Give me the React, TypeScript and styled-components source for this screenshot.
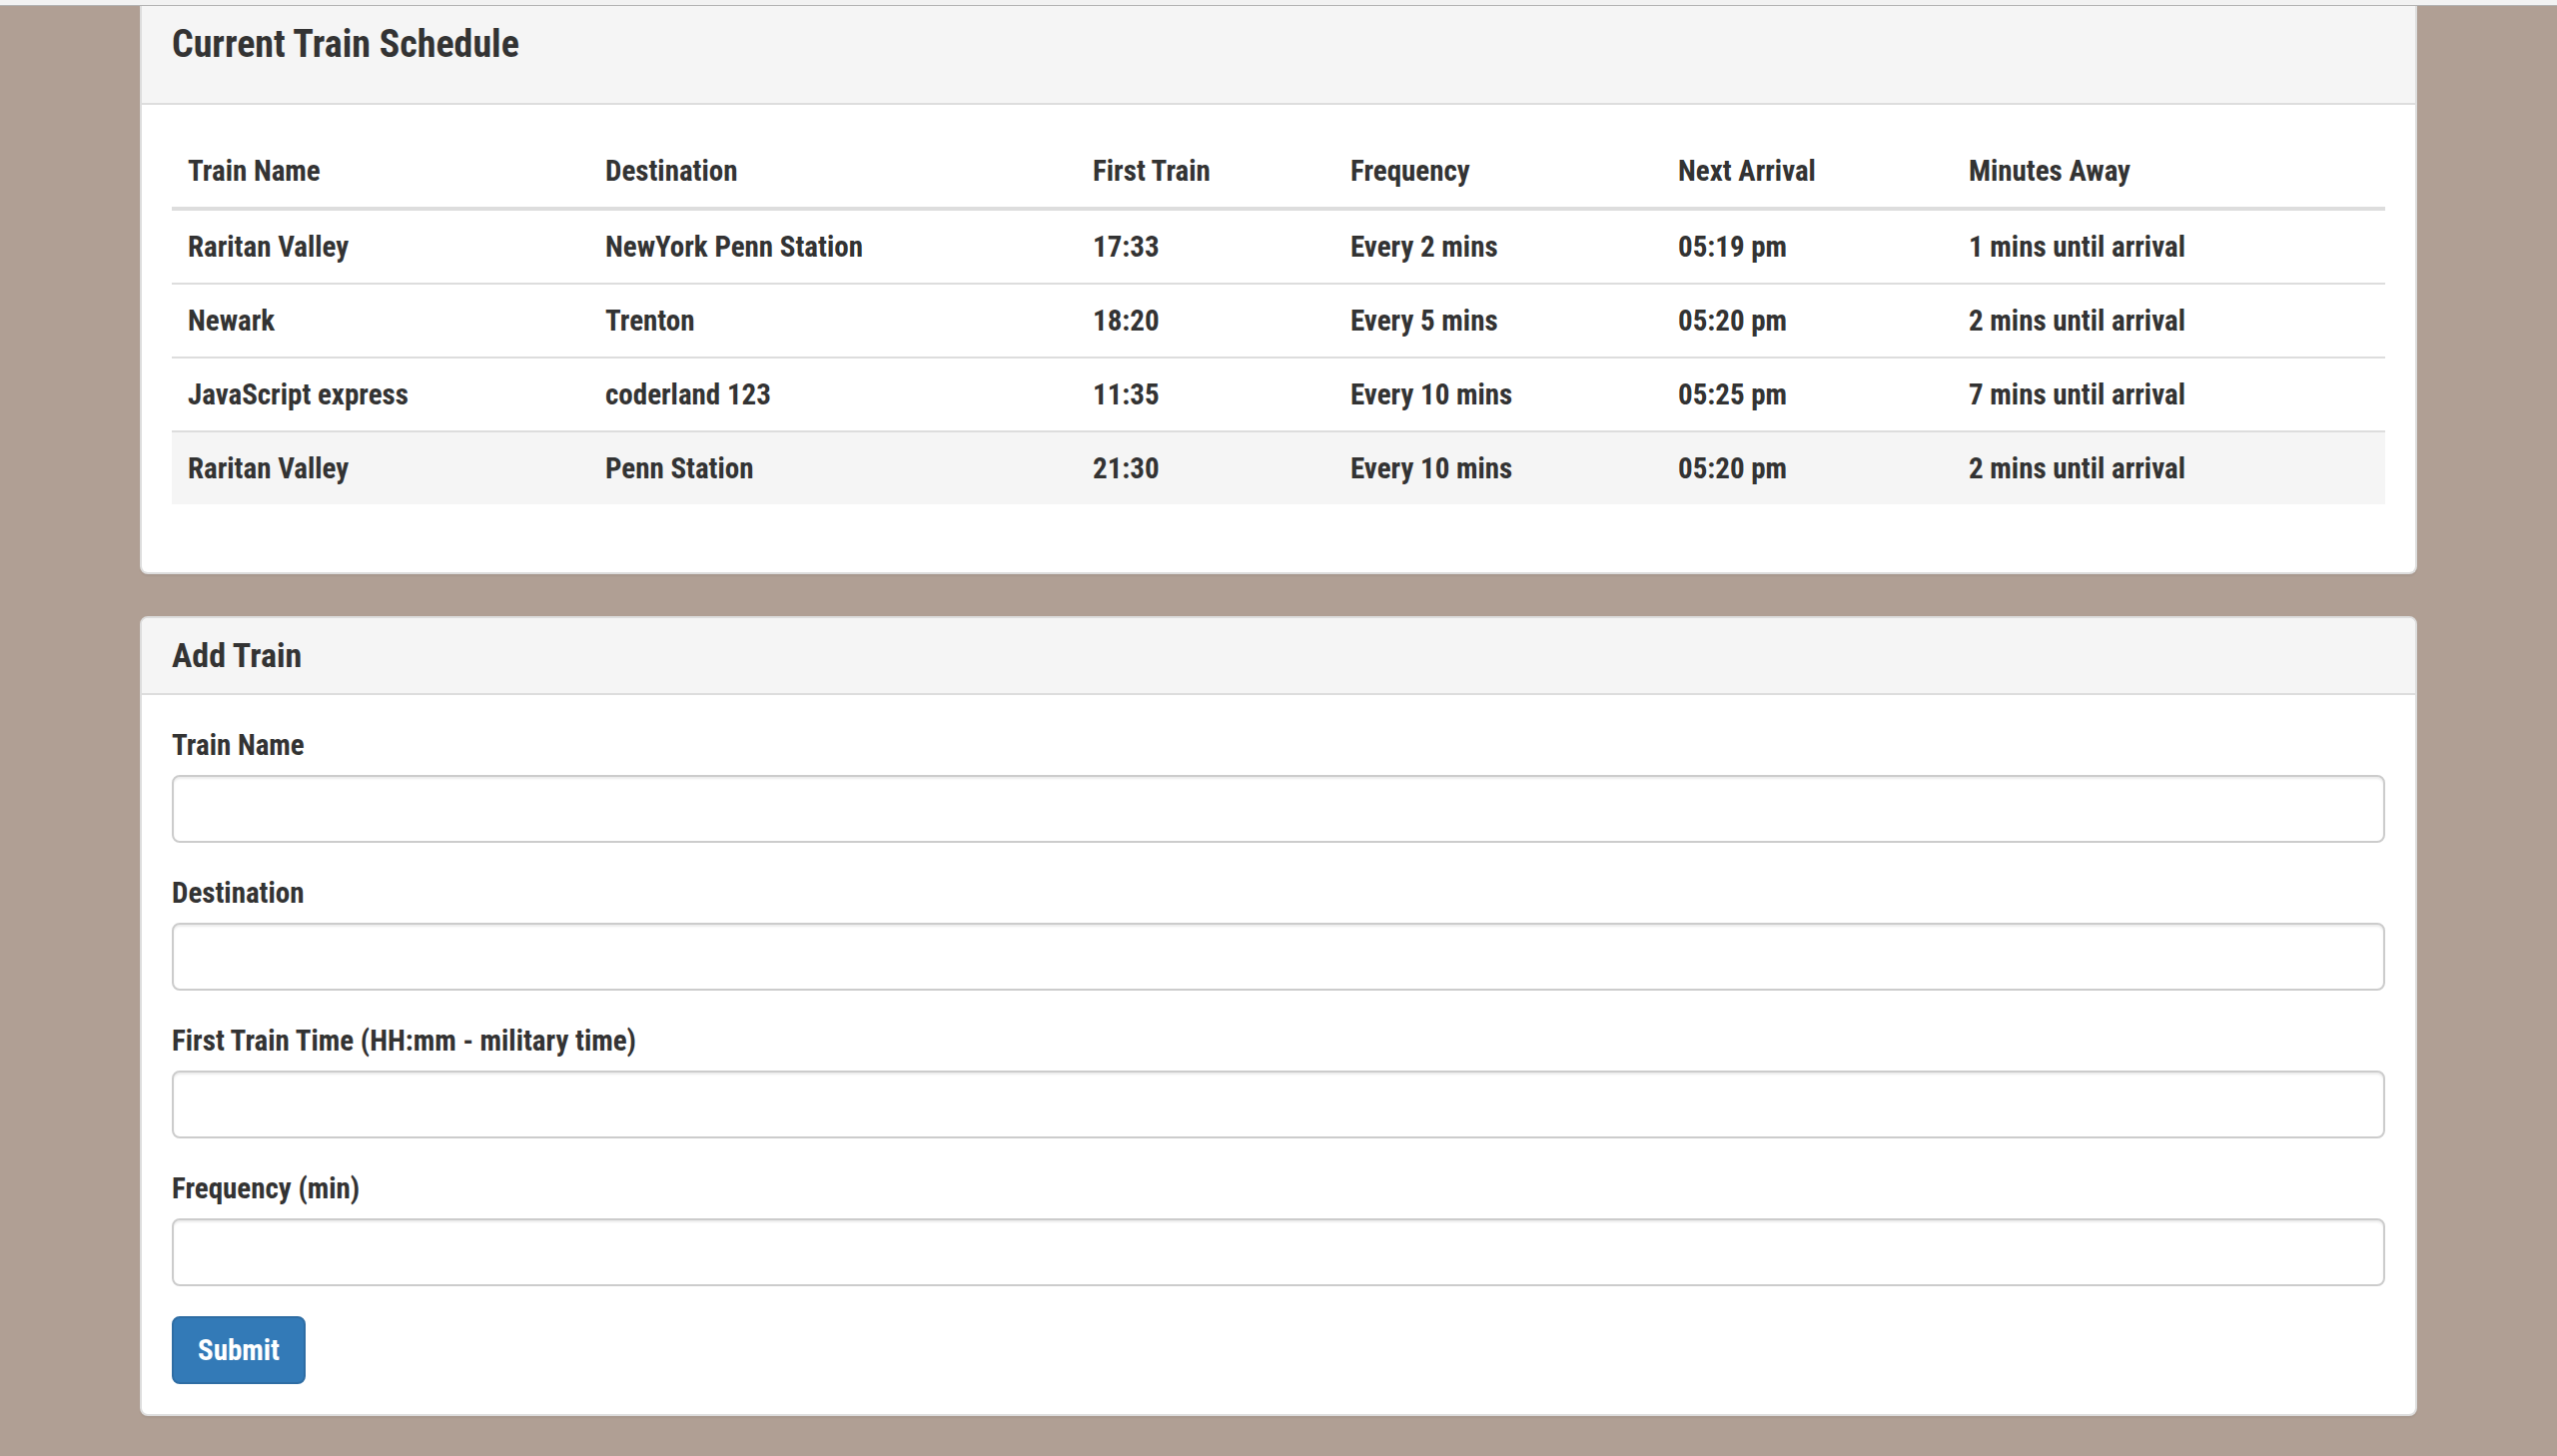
import styled, { createGlobalStyle } from "styled-components";

const GlobalStyle = createGlobalStyle`
  html, body {
    margin: 0;
    padding: 0;
  }
  body {
    background: #b09f94;
    font-family: "Roboto Condensed", "Liberation Sans Narrow", Roboto, sans-serif;
    font-stretch: condensed;
    font-weight: bold;
    font-size: 29px;
    line-height: 40px;
    color: #333;
  }
  * {
    box-sizing: border-box;
  }
`;

const TopBar = styled.div`
  height: 6px;
  background: #f2f2f2;
  border-bottom: 1px solid #b3b3b3;
`;

const Container = styled.div`
  display: flex;
  flex-direction: column;
  gap: 42px;
  padding: 0 140px 40px;
`;

const Panel = styled.section<{ $flushTop?: boolean }>`
  background: #fff;
  border: 2px solid #ddd;
  border-top-width: ${(p) => (p.$flushTop ? "0" : "2px")};
  border-radius: ${(p) => (p.$flushTop ? "0 0 8px 8px" : "8px")};
  box-shadow: 0 2px 2px rgba(0, 0, 0, 0.05);
  overflow: hidden;
`;

const PanelHeading = styled.div<{ $large?: boolean }>`
  background: #f5f5f5;
  border-bottom: 2px solid #ddd;
  padding: ${(p) => (p.$large ? "18px 30px 19px" : "19px 30px 20px")};
`;

const PanelTitle = styled.h3<{ $large?: boolean }>`
  margin: 0 0 ${(p) => (p.$large ? "20px" : "0")};
  font-size: ${(p) => (p.$large ? "38px" : "34px")};
  line-height: ${(p) => (p.$large ? "40px" : "36px")};
  font-weight: bold;
  color: #333;
`;

const PanelBody = styled.div`
  padding: 30px;
`;

const Table = styled.table`
  width: 100%;
  table-layout: fixed;
  border-collapse: collapse;
  margin-bottom: 38px;
`;

const HeadCell = styled.th`
  text-align: left;
  vertical-align: bottom;
  padding: 16px;
  border-bottom: 4px solid #ddd;
  font-weight: bold;
`;

const Row = styled.tr<{ $hover?: boolean }>`
  background: ${(p) => (p.$hover ? "#f5f5f5" : "transparent")};
`;

const Cell = styled.td`
  padding: 16px;
  border-top: 2px solid #ddd;
  white-space: nowrap;
`;

const FormGroup = styled.div`
  margin-bottom: 30px;
`;

const Label = styled.label`
  display: block;
  margin-bottom: 10px;
`;

const Input = styled.input`
  display: block;
  width: 100%;
  height: 68px;
  padding: 12px 24px;
  font: inherit;
  color: #555;
  background: #fff;
  border: 2px solid #ccc;
  border-radius: 8px;
  box-shadow: inset 0 2px 2px rgba(0, 0, 0, 0.075);
`;

const SubmitButton = styled.button`
  display: inline-block;
  padding: 12px 24px;
  font: inherit;
  line-height: 40px;
  color: #fff;
  background: #337ab7;
  border: 2px solid #2e6da4;
  border-radius: 8px;
  cursor: pointer;
`;

const columns = [
  { label: "Train Name", width: 418 },
  { label: "Destination", width: 488 },
  { label: "First Train", width: 258 },
  { label: "Frequency", width: 328 },
  { label: "Next Arrival", width: 291 },
  { label: "Minutes Away", width: undefined },
];

const trains = [
  ["Raritan Valley", "NewYork Penn Station", "17:33", "Every 2 mins", "05:19 pm", "1 mins until arrival"],
  ["Newark", "Trenton", "18:20", "Every 5 mins", "05:20 pm", "2 mins until arrival"],
  ["JavaScript express", "coderland 123", "11:35", "Every 10 mins", "05:25 pm", "7 mins until arrival"],
  ["Raritan Valley", "Penn Station", "21:30", "Every 10 mins", "05:20 pm", "2 mins until arrival"],
];

const fields = [
  { id: "train-name", label: "Train Name" },
  { id: "destination", label: "Destination" },
  { id: "first-train", label: "First Train Time (HH:mm - military time)" },
  { id: "frequency", label: "Frequency (min)" },
];

export default function App() {
  return (
    <>
      <GlobalStyle />
      <TopBar />
      <Container>
        <Panel $flushTop>
          <PanelHeading $large>
            <PanelTitle $large>Current Train Schedule</PanelTitle>
          </PanelHeading>
          <PanelBody>
            <Table>
              <colgroup>
                {columns.map((c) => (
                  <col key={c.label} style={c.width ? { width: c.width } : undefined} />
                ))}
              </colgroup>
              <thead>
                <tr>
                  {columns.map((c) => (
                    <HeadCell key={c.label}>{c.label}</HeadCell>
                  ))}
                </tr>
              </thead>
              <tbody>
                {trains.map((t, i) => (
                  <Row key={i} $hover={i === trains.length - 1}>
                    {t.map((v, j) => (
                      <Cell key={j}>{v}</Cell>
                    ))}
                  </Row>
                ))}
              </tbody>
            </Table>
          </PanelBody>
        </Panel>

        <Panel>
          <PanelHeading>
            <PanelTitle>Add Train</PanelTitle>
          </PanelHeading>
          <PanelBody>
            <form onSubmit={(e) => e.preventDefault()}>
              {fields.map((f) => (
                <FormGroup key={f.id}>
                  <Label htmlFor={f.id}>{f.label}</Label>
                  <Input id={f.id} type="text" />
                </FormGroup>
              ))}
              <SubmitButton type="submit">Submit</SubmitButton>
            </form>
          </PanelBody>
        </Panel>
      </Container>
    </>
  );
}
